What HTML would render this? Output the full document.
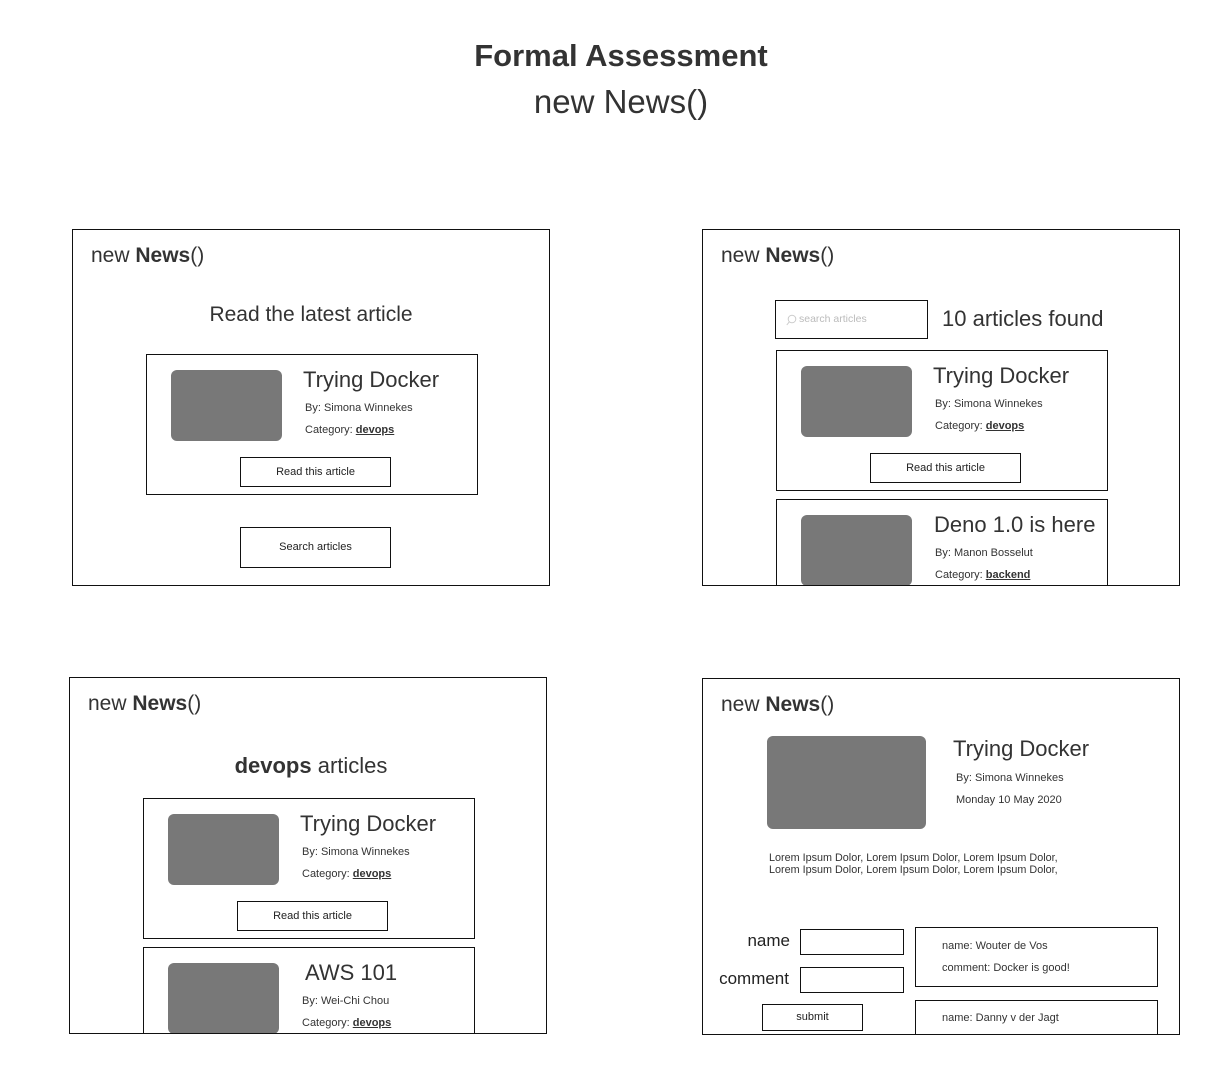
<!DOCTYPE html>
<html><head><meta charset="utf-8"><style>
*{box-sizing:border-box;margin:0;padding:0}
body{width:1232px;height:1073px;background:#fff;position:relative;overflow:hidden;font-family:"Liberation Sans",sans-serif;color:#333}
.a{position:absolute;white-space:nowrap}
.f{position:absolute;border:1px solid #111;width:478px;height:357px;overflow:hidden;background:#fff}
.hd{position:absolute;left:18px;top:13px;font-size:21px;line-height:26px}
.card{position:absolute;border:1px solid #111;width:332px;height:141px;left:73px}
.img{position:absolute;background:#787878;border-radius:6px}
.card .img{left:24px;top:15px;width:111px;height:71px}
.ct{position:absolute;left:156px;top:12px;font-size:22px;line-height:26px;white-space:nowrap}
.by{position:absolute;left:158px;top:46px;font-size:11px;line-height:14px;white-space:nowrap}
.cat{position:absolute;left:158px;top:68px;font-size:11px;line-height:14px;white-space:nowrap}
.btn{position:absolute;border:1px solid #111;width:151px;height:30px;font-size:11px;line-height:28px;text-align:center;color:#222}
.cat b{text-decoration:underline}
</style></head><body>
<div class="a" style="left:0;width:1242px;top:36px;text-align:center;font-size:31px;font-weight:bold;line-height:40px">Formal Assessment</div>
<div class="a" style="left:0;width:1242px;top:82px;text-align:center;font-size:33px;line-height:40px">new News()</div>

<!-- Frame 1 -->
<div class="f" style="left:72px;top:229px">
 <div class="hd">new <b>News</b>()</div>
 <div class="a" style="left:0;width:476px;text-align:center;top:72px;font-size:21px;line-height:26px">Read the latest article</div>
 <div class="card" style="top:124px">
  <div class="img"></div>
  <div class="ct">Trying Docker</div>
  <div class="by">By: Simona Winnekes</div>
  <div class="cat">Category: <b>devops</b></div>
  <div class="btn" style="left:93px;top:102px">Read this article</div>
 </div>
 <div class="btn" style="left:167px;top:297px;height:41px;line-height:39px">Search articles</div>
</div>

<!-- Frame 2 -->
<div class="f" style="left:702px;top:229px">
 <div class="hd">new <b>News</b>()</div>
 <div class="a" style="left:72px;top:70px;width:153px;height:39px;border:1px solid #111">
  <svg class="a" style="left:10px;top:13px" width="11" height="12" viewBox="0 0 11 12"><circle cx="6" cy="5" r="3.8" fill="none" stroke="#ccc" stroke-width="1"/><line x1="3.3" y1="7.8" x2="0.8" y2="11" stroke="#ccc" stroke-width="1"/></svg>
  <div class="a" style="left:23px;top:11px;font-size:10.5px;line-height:14px;color:#bbb">search articles</div>
 </div>
 <div class="a" style="left:239px;top:76px;font-size:22px;line-height:26px">10 articles found</div>
 <div class="card" style="top:120px">
  <div class="img"></div>
  <div class="ct">Trying Docker</div>
  <div class="by">By: Simona Winnekes</div>
  <div class="cat">Category: <b>devops</b></div>
  <div class="btn" style="left:93px;top:102px">Read this article</div>
 </div>
 <div class="card" style="top:269px">
  <div class="img"></div>
  <div class="ct" style="left:157px">Deno 1.0 is here</div>
  <div class="by">By: Manon Bosselut</div>
  <div class="cat">Category: <b>backend</b></div>
 </div>
</div>

<!-- Frame 3 -->
<div class="f" style="left:69px;top:677px">
 <div class="hd">new <b>News</b>()</div>
 <div class="a" style="left:0;width:482px;text-align:center;top:75px;font-size:22px;line-height:26px"><b>devops</b> articles</div>
 <div class="card" style="top:120px">
  <div class="img"></div>
  <div class="ct">Trying Docker</div>
  <div class="by">By: Simona Winnekes</div>
  <div class="cat">Category: <b>devops</b></div>
  <div class="btn" style="left:93px;top:102px">Read this article</div>
 </div>
 <div class="card" style="top:269px">
  <div class="img"></div>
  <div class="ct" style="left:161px">AWS 101</div>
  <div class="by">By: Wei-Chi Chou</div>
  <div class="cat">Category: <b>devops</b></div>
 </div>
</div>

<!-- Frame 4 -->
<div class="f" style="left:702px;top:678px">
 <div class="hd">new <b>News</b>()</div>
 <div class="img" style="left:64px;top:57px;width:159px;height:93px"></div>
 <div class="a" style="left:250px;top:57px;font-size:22px;line-height:26px">Trying Docker</div>
 <div class="a" style="left:253px;top:92px;font-size:11px;line-height:14px">By: Simona Winnekes</div>
 <div class="a" style="left:253px;top:114px;font-size:11px;line-height:14px">Monday 10 May 2020</div>
 <div class="a" style="left:66px;top:173px;font-size:10.8px;line-height:12px">Lorem Ipsum Dolor, Lorem Ipsum Dolor, Lorem Ipsum Dolor,<br>Lorem Ipsum Dolor, Lorem Ipsum Dolor, Lorem Ipsum Dolor,</div>
 <div class="a" style="left:0;width:87px;text-align:right;top:252px;font-size:17px;line-height:20px;color:#222">name</div>
 <div class="a" style="left:0;width:86px;text-align:right;top:290px;font-size:17px;line-height:20px;color:#222">comment</div>
 <div class="a" style="left:97px;top:250px;width:104px;height:26px;border:1px solid #111"></div>
 <div class="a" style="left:97px;top:288px;width:104px;height:26px;border:1px solid #111"></div>
 <div class="btn" style="left:59px;top:325px;width:101px;height:27px;line-height:25px">submit</div>
 <div class="a" style="left:212px;top:248px;width:243px;height:60px;border:1px solid #111">
  <div class="a" style="left:26px;top:11px;font-size:11px;line-height:14px">name: Wouter de Vos</div>
  <div class="a" style="left:26px;top:33px;font-size:11px;line-height:14px">comment: Docker is good!</div>
 </div>
 <div class="a" style="left:212px;top:321px;width:243px;height:60px;border:1px solid #111">
  <div class="a" style="left:26px;top:10px;font-size:11px;line-height:14px">name: Danny v der Jagt</div>
 </div>
</div>
</body></html>
